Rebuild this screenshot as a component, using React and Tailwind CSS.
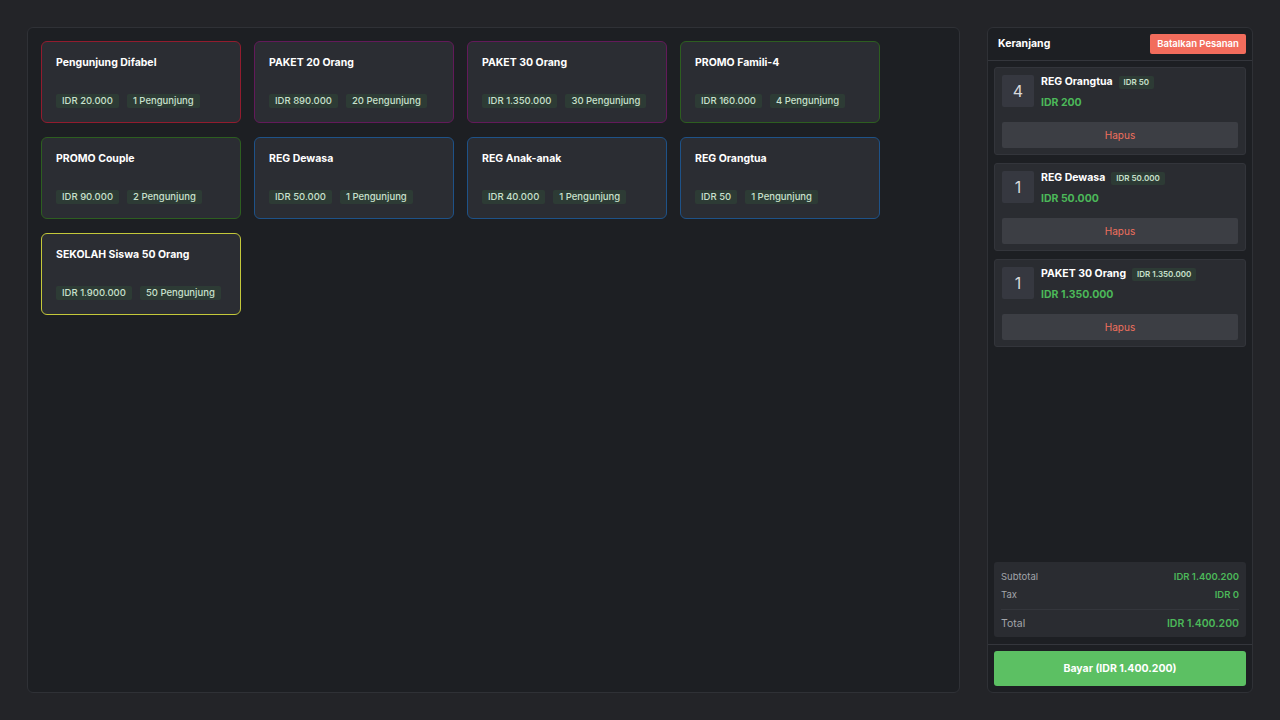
import React from 'react';

const products = [
  { name: 'Pengunjung Difabel', price: 'IDR 20.000', pax: '1 Pengunjung', border: 'border-[#921c2e]' },
  { name: 'PAKET 20 Orang', price: 'IDR 890.000', pax: '20 Pengunjung', border: 'border-[#631a5a]' },
  { name: 'PAKET 30 Orang', price: 'IDR 1.350.000', pax: '30 Pengunjung', border: 'border-[#631a5a]' },
  { name: 'PROMO Famili-4', price: 'IDR 160.000', pax: '4 Pengunjung', border: 'border-[#2d5e20]' },
  { name: 'PROMO Couple', price: 'IDR 90.000', pax: '2 Pengunjung', border: 'border-[#2d5e20]' },
  { name: 'REG Dewasa', price: 'IDR 50.000', pax: '1 Pengunjung', border: 'border-[#1e5288]' },
  { name: 'REG Anak-anak', price: 'IDR 40.000', pax: '1 Pengunjung', border: 'border-[#1e5288]' },
  { name: 'REG Orangtua', price: 'IDR 50', pax: '1 Pengunjung', border: 'border-[#1e5288]' },
  { name: 'SEKOLAH Siswa 50 Orang', price: 'IDR 1.900.000', pax: '50 Pengunjung', border: 'border-[#c4c83a]' },
];

const cart = [
  { qty: 4, name: 'REG Orangtua', unit: 'IDR 50', total: 'IDR 200' },
  { qty: 1, name: 'REG Dewasa', unit: 'IDR 50.000', total: 'IDR 50.000' },
  { qty: 1, name: 'PAKET 30 Orang', unit: 'IDR 1.350.000', total: 'IDR 1.350.000' },
];

const Badge = ({ children }) => (
  <span className="bg-[#2d3b35] text-[#c8e0cc] text-[9.5px] font-medium leading-[14px] px-[6px] rounded-[2px]">
    {children}
  </span>
);

const ProductCard = ({ product }) => (
  <div className={`w-[200px] h-[82px] rounded-md border ${product.border} bg-[#2b2d33] px-[14px] pt-[14px] pb-[14px] flex flex-col justify-between cursor-pointer`}>
    <div className="text-[10.5px] font-bold text-white leading-[14px]">{product.name}</div>
    <div className="flex gap-[8px]">
      <Badge>{product.price}</Badge>
      <Badge>{product.pax}</Badge>
    </div>
  </div>
);

const CartItem = ({ item }) => (
  <div className="rounded-[3px] border border-[#33353b] bg-[#2a2c31] px-[7px] pt-[7px] pb-[6px]">
    <div className="flex items-start gap-[7px] h-[32px]">
      <div className="w-[32px] h-[32px] rounded-[2px] bg-[#363840] text-[#d8d9dc] text-[16px] flex items-center justify-center">
        {item.qty}
      </div>
      <div className="flex flex-col">
        <div className="flex items-center gap-[6px] h-[14px]">
          <span className="text-[10.5px] font-bold text-white">{item.name}</span>
          <span className="bg-[#2d3b35] text-[#c8e0cc] text-[8px] leading-[13px] px-[5px] rounded-[2px] font-semibold">{item.unit}</span>
        </div>
        <div className="text-[10.5px] font-bold text-[#4cb859] leading-[14px] mt-[7px]">{item.total}</div>
      </div>
    </div>
    <button className="mt-[15px] w-full h-[26px] rounded-[2px] bg-[#3c3e44] text-[#f0705e] text-[10px]">Hapus</button>
  </div>
);

export default function App() {
  return (
    <div className="w-[1280px] h-[720px] bg-[#232428] p-[27px] flex gap-[27px]" style={{ fontFamily: 'Inter, "Noto Sans", sans-serif' }}>
      <div className="w-[933px] h-full rounded-md border border-[#2f3136] bg-[#1d1f23] p-[13px]">
        <div className="flex flex-wrap gap-x-[13px] gap-y-[14px]">
          {products.map((p) => (
            <ProductCard key={p.name} product={p} />
          ))}
        </div>
      </div>

      <div className="w-[266px] h-full rounded-md border border-[#2f3136] bg-[#1d1f23] flex flex-col">
        <div className="h-[33px] flex items-center justify-between pl-[10px] pr-[6px] border-b border-[#34363c]">
          <span className="text-[10.5px] font-bold text-white">Keranjang</span>
          <button className="h-[20px] w-[96px] rounded-[2px] bg-[#f26c5c] text-white text-[9.5px] font-semibold">Batalkan Pesanan</button>
        </div>

        <div className="flex-1 flex flex-col gap-[8px] p-[6px]">
          {cart.map((item) => (
            <CartItem key={item.name} item={item} />
          ))}
        </div>

        <div className="px-[6px] pb-[7px]">
          <div className="rounded-[3px] bg-[#2a2c31] px-[7px] pt-[3px] pb-[2px]">
            <div className="flex justify-between text-[9.5px] leading-[18px] mt-[3px]">
              <span className="text-[#a2a5aa]">Subtotal</span>
              <span className="text-[#4cb859] font-semibold">IDR 1.400.200</span>
            </div>
            <div className="flex justify-between text-[9.5px] leading-[18px]">
              <span className="text-[#a2a5aa]">Tax</span>
              <span className="text-[#4cb859] font-semibold">IDR 0</span>
            </div>
            <div className="border-t border-[#34363c] mt-[5px] flex justify-between text-[10.5px] leading-[22px] pt-[3px]">
              <span className="text-[#a2a5aa]">Total</span>
              <span className="text-[#4cb859] font-semibold">IDR 1.400.200</span>
            </div>
          </div>
        </div>

        <div className="border-t border-[#34363c] px-[6px] pt-[6px] pb-[6px]">
          <button className="w-full h-[35px] rounded-[3px] bg-[#5cc063] text-white text-[10.5px] font-bold">Bayar (IDR 1.400.200)</button>
        </div>
      </div>
    </div>
  );
}
